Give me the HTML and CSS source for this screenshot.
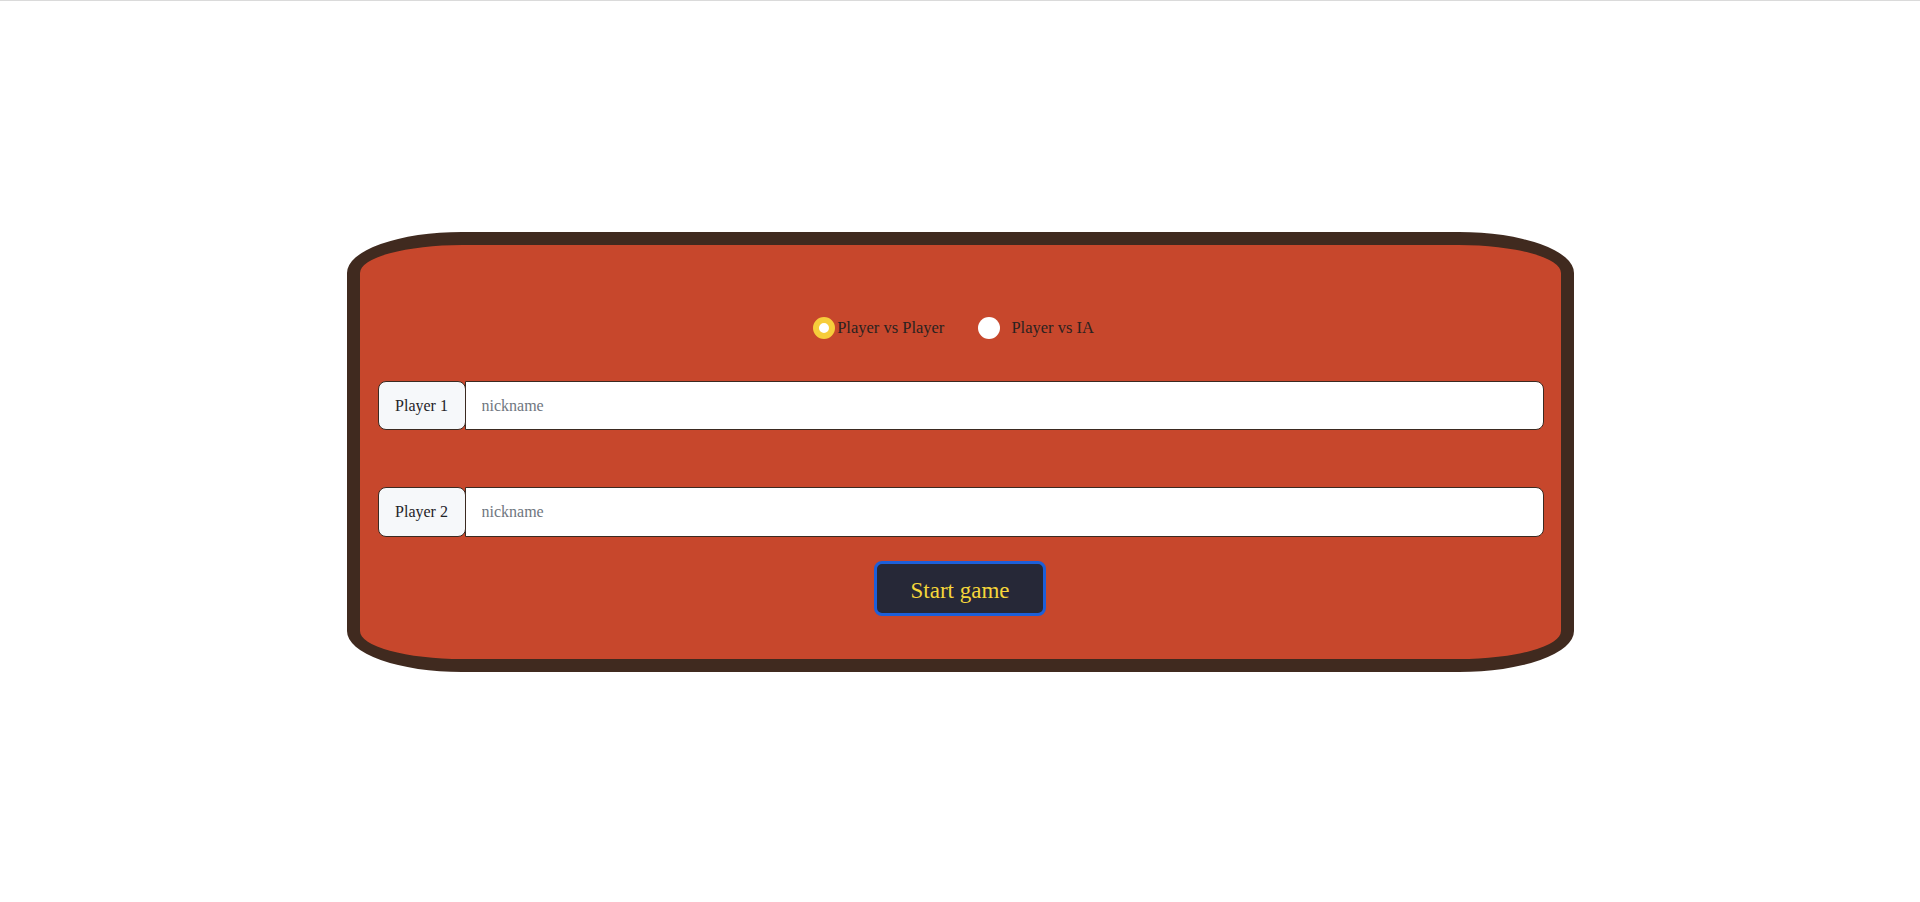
FILE: index.html
```html
<!DOCTYPE html>
<html lang="en">
<head>
<meta charset="utf-8">
<title>Game setup</title>
<link rel="stylesheet" href="styles.css">
</head>
<body>
<main class="page">
  <form class="card">
    <div class="modes">
      <label class="mode mode-pvp">
        <span class="radio radio-on"></span>
        <span class="mode-text">Player vs Player</span>
      </label>
      <label class="mode mode-ia">
        <span class="radio"></span>
        <span class="mode-text">Player vs IA</span>
      </label>
    </div>
    <div class="group group-1">
      <span class="group-label">Player 1</span>
      <input class="group-input" type="text" placeholder="nickname">
    </div>
    <div class="group group-2">
      <span class="group-label">Player 2</span>
      <input class="group-input" type="text" placeholder="nickname">
    </div>
    <div class="actions">
      <button type="button" class="start">Start game</button>
    </div>
  </form>
</main>
</body>
</html>
```
FILE: styles.css
```css
* { box-sizing: border-box; }
html, body { margin: 0; padding: 0; background: #ffffff; }
body { font-family: "Liberation Serif", serif; }
.page {
  min-height: 902px;
  height: 902px;
  border-top: 1px solid #dadada;
  display: flex;
  align-items: center;
  justify-content: center;
}
.card {
  width: 1227px;
  height: 440px;
  margin-top: 1px;
  background: #c7472c;
  border: 13px solid #402a1f;
  border-radius: 115px / 41px;
  padding: 0 17px 0 18px;
  display: flex;
  flex-direction: column;
}
.modes {
  margin-top: 72px;
  height: 22px;
  display: flex;
  justify-content: center;
  align-items: center;
  padding-right: 14px;
}
.mode {
  display: flex;
  align-items: center;
  font-size: 16.5px;
  color: #2a2220;
}
.mode-pvp { gap: 2px; margin-right: 34px; }
.mode-ia { gap: 11px; }
.radio {
  width: 22px;
  height: 22px;
  border-radius: 50%;
  background: #ffffff;
  display: inline-block;
}
.radio-on { border: 6px solid #f6cd3b; }
.group {
  display: flex;
  height: 49px;
}
.group-1 { margin-top: 42px; }
.group-2 { margin-top: 57px; height: 50px; }
.group-label {
  width: 88px;
  flex: none;
  display: flex;
  align-items: center;
  justify-content: center;
  background: #f6f8fa;
  border: 1px solid #3b2a21;
  border-radius: 8px;
  font-size: 16px;
  color: #1f2328;
  position: relative;
  z-index: 1;
}
.group-input {
  flex: 1;
  margin-left: -1px;
  border: 1px solid #3b2a21;
  border-radius: 0 8px 8px 0;
  background: #ffffff;
  padding: 0 16px;
  font-family: "Liberation Serif", serif;
  font-size: 16px;
  color: #333;
  outline: none;
}
.group-input::placeholder { color: #6f7680; }
.actions {
  margin-top: 24px;
  display: flex;
  justify-content: center;
}
.start {
  width: 172px;
  height: 55px;
  background: #262837;
  border: 3px solid #1d5fd8;
  border-radius: 8px;
  color: #f5d63a;
  font-family: "Liberation Serif", serif;
  font-size: 23px;
  padding: 4px 0 0;
  margin-left: -1px;
}
```
